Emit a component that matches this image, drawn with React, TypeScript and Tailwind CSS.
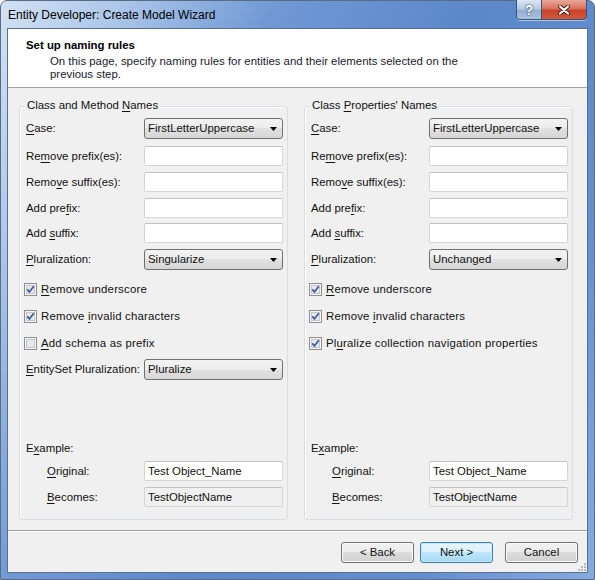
import React from "react";

// mnemonic label: "&" marks the underlined letter
function M({ t }: { t: string }) {
  const i = t.indexOf("&");
  if (i < 0) return <>{t}</>;
  return (
    <>
      {t.slice(0, i)}
      <span className="underline underline-offset-2 decoration-1">{t[i + 1]}</span>
      {t.slice(i + 2)}
    </>
  );
}

function Combo({ value }: { value: string }) {
  return (
    <div className="w-[139px] h-[21px] rounded-[3px] border border-[#707070] bg-[linear-gradient(#f3f3f3,#ececec_50%,#e1e1e1_50%,#d6d6d6)] flex items-center justify-between pl-[3px] pr-[5px]">
      <span className="leading-[13px]">{value}</span>
      <svg width="7" height="4" viewBox="0 0 7 4">
        <path d="M0 0h7L3.5 4z" fill="#000" />
      </svg>
    </div>
  );
}

function TextBox({ value = "", readOnly = false }: { value?: string; readOnly?: boolean }) {
  return (
    <div
      className={
        "w-[139px] h-[20px] rounded-[2px] border border-[#d5d5d5] border-t-[#c2c2c2] flex items-center pl-[3px] leading-[13px] " +
        (readOnly ? "bg-[#f0f0f0]" : "bg-white")
      }
    >
      {value}
    </div>
  );
}

function Field({ label, children, mt }: { label: string; children: React.ReactNode; mt: string }) {
  return (
    <div className={"flex items-center pl-[6px] " + mt}>
      <div className="w-[118px] leading-[13px] whitespace-nowrap">
        <M t={label} />
      </div>
      {children}
    </div>
  );
}

function Check({ label, checked, mt }: { label: string; checked: boolean; mt: string }) {
  return (
    <div className={"flex items-center h-[16px] pl-[4px] gap-[4px] " + mt}>
      <svg width="13" height="13" viewBox="0 0 13 13">
        <rect x="0.5" y="0.5" width="12" height="12" fill="#f6f6f6" stroke="#8e8f8f" />
        <rect x="2.5" y="2.5" width="8" height="8" fill="#e4e7ec" stroke="#c3c6cc" />
        {checked && (
          <path d="M3.3 6.4L5.4 8.9L9.8 3.2" fill="none" stroke="#3f5a96" strokeWidth="1.7" />
        )}
      </svg>
      <span className="leading-[13px] tracking-[0.2px]">
        <M t={label} />
      </span>
    </div>
  );
}

function Group({
  title,
  plural,
  third,
  entitySet,
}: {
  title: string;
  plural: string;
  third: { label: string; checked: boolean };
  entitySet: boolean;
}) {
  return (
    <div className="relative w-[269px] h-[414px] rounded-[3px] border border-[#d5dfe5] shadow-[inset_1px_1px_0_#fff] flex flex-col pt-[11px] pr-[4px] pb-[12px]">
      <div className="absolute left-[5px] top-[-8px] px-[2px] bg-[#f0f0f0] leading-[13px]">
        <M t={title} />
      </div>
      <Field label="&Case:" mt="">
        <Combo value="FirstLetterUppercase" />
      </Field>
      <Field label="Re&move prefix(es):" mt="mt-[7px]">
        <TextBox />
      </Field>
      <Field label="Remo&ve suffix(es):" mt="mt-[6px]">
        <TextBox />
      </Field>
      <Field label="Add pre&fix:" mt="mt-[6px]">
        <TextBox />
      </Field>
      <Field label="Add &suffix:" mt="mt-[5px]">
        <TextBox />
      </Field>
      <Field label="&Pluralization:" mt="mt-[6px]">
        <Combo value={plural} />
      </Field>
      <Check label="&Remove underscore" checked mt="mt-[11px]" />
      <Check label="Remove &invalid characters" checked mt="mt-[11px]" />
      <Check label={third.label} checked={third.checked} mt="mt-[11px]" />
      {entitySet && (
        <Field label="&EntitySet Pluralization:" mt="mt-[8px]">
          <Combo value="Pluralize" />
        </Field>
      )}
      <div className="flex-1" />
      <div className="pl-[6px] leading-[13px]">
        <M t="E&xample:" />
      </div>
      <div className="flex items-center pl-[27px] mt-[6px]">
        <div className="w-[97px] leading-[13px]">
          <M t="&Original:" />
        </div>
        <TextBox value="Test Object_Name" />
      </div>
      <div className="flex items-center pl-[27px] mt-[6px]">
        <div className="w-[97px] leading-[13px]">
          <M t="&Becomes:" />
        </div>
        <TextBox value="TestObjectName" readOnly />
      </div>
    </div>
  );
}

function Button({ label, primary = false, cls = "" }: { label: string; primary?: boolean; cls?: string }) {
  return (
    <div
      className={
        "w-[73px] h-[21px] rounded-[3px] border flex items-center justify-center leading-[13px] " +
        (primary
          ? "border-[#3c7fb1] bg-[linear-gradient(#eaf6fd,#d9f0fc_50%,#bee6fd_50%,#a7d9f5)] shadow-[inset_0_0_0_1px_#c7eaf9] "
          : "border-[#707070] bg-[linear-gradient(#f2f2f2,#ebebeb_50%,#dddddd_50%,#cfcfcf)] shadow-[inset_0_0_0_1px_#fcfcfc] ") +
        cls
      }
    >
      {label}
    </div>
  );
}

export default function App() {
  return (
    <div className="w-[595px] h-[580px] bg-white font-['Liberation_Sans',Arial,sans-serif] text-[11.4px] text-[#111]">
      <div className="h-full flex flex-col rounded-t-[7px] border border-[#5a6b84] bg-[linear-gradient(115deg,#d2e2f4_0%,#acc6e9_14%,#7099d4_32%,#5b88cb_55%,#628ecf_80%,#86abdf_100%)]">
        {/* title bar */}
        <div className="h-[27px] flex justify-between">
          <div className="pl-[7px] pt-[7px] text-[12px] leading-[14px] text-black">
            Entity Developer: Create Model Wizard
          </div>
          <div className="flex -mt-[1px] mr-[7px] h-[20px] rounded-b-[4px] border border-t-0 border-[#3e5374] overflow-hidden shadow-[0_1px_0_rgba(255,255,255,0.5)]">
            <div className="w-[25px] h-full border-r border-[#3e5374] bg-[linear-gradient(#d9e5f3,#b9cbe3_45%,#95afd2_55%,#a9c1df)] flex items-center justify-center">
              <span className="text-[14px] font-bold leading-none text-white [text-shadow:0_0_2px_#203a5e,0_0_1px_#203a5e]">?</span>
            </div>
            <div className="w-[44px] h-full bg-[linear-gradient(#e9a99b,#d9705c_45%,#c7432c_55%,#d35a3c)] flex items-center justify-center">
              <svg width="12" height="10" viewBox="0 0 12 10">
                <path d="M2 1.5L10 8.5M10 1.5L2 8.5" stroke="#4a1a10" strokeWidth="4" strokeLinecap="round" />
                <path d="M2 1.5L10 8.5M10 1.5L2 8.5" stroke="#fff" strokeWidth="2.2" strokeLinecap="round" />
              </svg>
            </div>
          </div>
        </div>

        {/* client */}
        <div className="flex-1 mx-[6px] border border-[#5b6f8e] bg-[#f0f0f0] flex flex-col">
          <div className="h-[59px] bg-white border-b border-[#a0a0a0] pt-[10px] pl-[18px]">
            <div className="font-bold leading-[13px] text-black">Set up naming rules</div>
            <div className="pl-[24px] mt-[3px] leading-[13px] text-[#1a1a2e]">
              On this page, specify naming rules for entities and their elements selected on the
              <br />
              previous step.
            </div>
          </div>

          <div className="h-[442px] flex pt-[18px] pl-[11px] gap-[16px]">
            <Group
              title="Class and Method &Names"
              plural="Singularize"
              third={{ label: "&Add schema as prefix", checked: false }}
              entitySet
            />
            <Group
              title="Class &Properties' Names"
              plural="Unchanged"
              third={{ label: "Pl&uralize collection navigation properties", checked: true }}
              entitySet={false}
            />
          </div>

          <div className="relative flex-1 border-t border-[#a0a0a0] shadow-[inset_0_1px_0_#fff] flex justify-end items-start pt-[11px] pr-[9px]">
            <Button label="< Back" />
            <Button label="Next >" primary cls="ml-[6px]" />
            <Button label="Cancel" cls="ml-[12px]" />
            <svg className="absolute right-[1px] bottom-[1px]" width="10" height="10" viewBox="0 0 10 10">
              {[
                [8, 0],
                [8, 3],
                [5, 3],
                [8, 6],
                [5, 6],
                [2, 6],
              ].map(([x, y], i) => (
                <rect key={i} x={x} y={y + 2} width="2" height="2" fill="#b8b8b8" />
              ))}
            </svg>
          </div>
        </div>
        <div className="h-[6px]" />
      </div>
    </div>
  );
}
